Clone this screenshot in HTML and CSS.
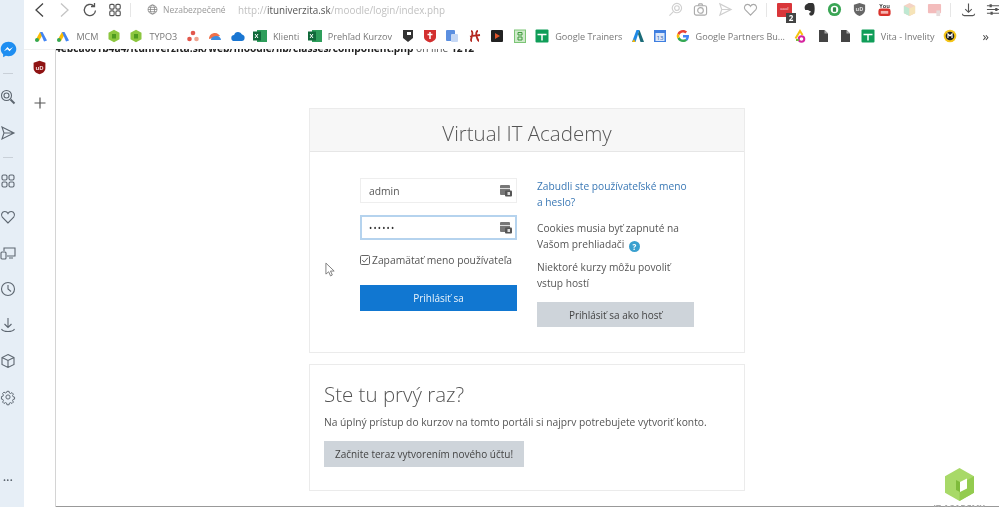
FILE: index.html
```html
<!DOCTYPE html>
<html lang="sk">
<head>
<meta charset="utf-8">
<title>Virtual IT Academy</title>
<link rel="stylesheet" href="styles.css">
</head>
<body>
<div class="app">
  <aside class="sidebar">
    <div class="side-item"><svg class="ic-messenger" viewBox="0 0 24 24"><path fill="#1f8ef1" d="M12 1C5.6 1 1 5.500 1 11.300c0 3 1.300 5.700 3.400 7.500V23l3.800-2.100c1.200.4 2.500.6 3.800.6 6.400 0 11-4.500 11-10.200S18.400 1 12 1z"/><path fill="#fff" d="M5.500 14.500l5-6 3 3 5-3-5 6-3-3z"/></svg></div>
    <div class="side-dash"></div>
    <div class="side-item"><svg class="ic" viewBox="0 0 16 16"><circle cx="6.500" cy="6.500" r="5"/><circle cx="6.500" cy="6.500" r="2.500"/><path d="M10.500 10.500l4 4" stroke-width="2"/></svg></div>
    <div class="side-item"><svg class="ic" viewBox="0 0 16 16"><path d="M2 2l12 6-12 6 2-6zM4 8h10"/></svg></div>
    <div class="side-dash"></div>
    <div class="side-item"><svg class="ic" viewBox="0 0 16 16"><rect x="2" y="2" width="5" height="5" rx="1.500"/><rect x="9" y="2" width="5" height="5" rx="1.500"/><rect x="2" y="9" width="5" height="5" rx="1.500"/><rect x="9" y="9" width="5" height="5" rx="1.500"/></svg></div>
    <div class="side-item"><svg class="ic" viewBox="0 0 16 16"><path d="M8 14L2.300 8.200C.5 6 2 2.500 4.800 2.500 6.300 2.500 7.400 3.300 8 4.500c.6-1.200 1.700-2 3.200-2 2.800 0 4.300 3.500 2.500 5.700z"/></svg></div>
    <div class="side-item"><svg class="ic" viewBox="0 0 16 16"><path d="M4 6V3h11v8H7M9 13h4"/><rect x="1" y="7" width="5" height="7" rx="1"/></svg></div>
    <div class="side-item"><svg class="ic" viewBox="0 0 16 16"><circle cx="8" cy="8" r="6.500"/><path d="M8 4v4l3 2.500"/></svg></div>
    <div class="side-item"><svg class="ic" viewBox="0 0 16 16"><path d="M8 1v9M4.500 7L8 10.500 11.500 7M1.500 12c1 2 3 2.500 6.500 2.500s5.500-.5 6.500-2.500"/></svg></div>
    <div class="side-item"><svg class="ic" viewBox="0 0 16 16"><path d="M8 1.500l6 3v7l-6 3-6-3v-7zM2 4.500l6 3 6-3M8 7.500v7"/></svg></div>
    <div class="side-item"><svg class="ic ic-gear" viewBox="0 0 16 16"><circle cx="8" cy="8" r="2.400"/><path d="M6.800 1.500h2.400l.4 1.900 1.300.6 1.700-1 1.600 1.700-1 1.600.6 1.400 1.700.4v2.300l-1.700.4-.6 1.400 1 1.600-1.600 1.600-1.700-1-1.300.6-.4 1.900H6.800l-.4-1.900-1.300-.6-1.700 1-1.600-1.600 1-1.600-.6-1.400-1.700-.4V7.500l1.700-.4.6-1.400-1-1.600L3.400 2.400l1.700 1 1.300-.6z"/></svg></div>
    <div class="side-item side-more">•••</div>
  </aside>

  <div class="main">
    <header class="toolbar">
      <svg class="nav" viewBox="0 0 16 16"><path d="M11 1.500L4 8l7 6.500"/></svg>
      <svg class="nav nav-off" viewBox="0 0 16 16"><path d="M5 1.500L12 8l-7 6.500"/></svg>
      <svg class="nav nav-reload" viewBox="0 0 16 16"><path d="M13.500 8.500A5.600 5.600 0 1 1 11.500 3.700M12.500 1v3.500H9"/></svg>
      <svg class="nav nav-grid" viewBox="0 0 16 16"><rect x="2" y="1.500" width="5" height="5.500" rx="1.500"/><rect x="9" y="1.500" width="5" height="5.500" rx="1.500"/><rect x="2" y="9" width="5" height="5.500" rx="1.500"/><rect x="9" y="9" width="5" height="5.500" rx="1.500"/></svg>
      <span class="tool-sep"></span>
      <svg class="globe" viewBox="0 0 16 16"><circle cx="8" cy="8" r="6.500"/><ellipse cx="8" cy="8" rx="3" ry="6.500"/><path d="M1.500 8h13M2.500 4.800h11M2.500 11.200h11"/></svg>
      <span class="insecure">Nezabezpečené</span>
      <span class="url">http://<b>ituniverzita.sk</b>/moodle/login/index.php</span>
      <div class="tool-right">
        <svg class="t-ic t-pale" viewBox="0 0 16 16"><circle cx="9.500" cy="6.500" r="5"/><circle cx="9.500" cy="6.500" r="2.500"/><path d="M5.500 10.500L1.500 14.500"/></svg>
        <svg class="t-ic t-mid" viewBox="0 0 16 16"><rect x="1.500" y="4" width="13" height="10" rx="2"/><circle cx="8" cy="9" r="3"/><path d="M5.500 4l1-2h3l1 2"/></svg>
        <svg class="t-ic t-pale" viewBox="0 0 16 16"><path d="M2 2l12 6-12 6 2-6zM4 8h10"/></svg>
        <svg class="t-ic t-mid" viewBox="0 0 16 16"><path d="M8 14L2.300 8.200C.5 6 2 2.500 4.800 2.500 6.300 2.500 7.400 3.300 8 4.500c.6-1.200 1.700-2 3.200-2 2.800 0 4.300 3.500 2.500 5.700z"/></svg>
        <span class="tool-sep tool-sep-r"></span>
        <span class="ext-red"><span class="ext-dots">ooo!</span><span class="ext-badge">2</span></span>
        <svg class="t-fill" viewBox="0 0 16 16"><path fill="#333" d="M4 3l3-2h3c3 0 3.500 2 3.500 6 0 4-.5 7-3 7.500-1.500.3-2.800-.6-2.800-2 0-1.200 1-1.800 2.300-1.600-.5-1.500-2.800-1.500-3.500-2.400H3.500C2.500 6.500 2.500 4.500 4 3z"/></svg>
        <svg class="t-fill" viewBox="0 0 16 16"><circle cx="8" cy="8" r="7" fill="#3aa655"/><circle cx="8" cy="8" r="4" fill="#fff"/><rect x="6.300" y="5.500" width="3.400" height="5" rx="1" fill="#2f8a47"/></svg>
        <svg class="t-fill" viewBox="0 0 16 16"><path fill="#666" d="M8 1l6 2v5c0 3.500-2.500 5.800-6 7-3.500-1.200-6-3.500-6-7V3z"/><text x="8" y="10" class="shield-txt">uD</text></svg>
        <svg class="t-fill" viewBox="0 0 16 16"><text x="8" y="6" class="yt-top">You</text><rect x="1.500" y="7" width="13" height="8" rx="2.500" fill="#d9322b"/><rect x="4" y="9.500" width="8" height="3" fill="#f5b5b0"/></svg>
        <svg class="t-fill" viewBox="0 0 16 16"><path fill="#f4d3c4" d="M8 1l6 3v8l-6 3-6-3V4z"/><path fill="#bfe8d2" d="M2 4l6 3v8l-6-3z"/><path fill="#f6e4b8" d="M14 4L8 7v8l6-3z"/></svg>
        <svg class="t-fill" viewBox="0 0 16 16"><rect x="1" y="2" width="14" height="10" rx="1" fill="#f3bcbc"/><rect x="10" y="9" width="4" height="6" fill="#e5dcdc"/></svg>
        <span class="tool-sep tool-sep-r2"></span>
        <svg class="t-ic t-dark" viewBox="0 0 16 16"><path d="M8 1.500v9M4.500 7.500L8 11l3.500-3.500M1.500 12.500c0 1.300.7 2 2 2h9c1.300 0 2-.7 2-2"/></svg>
        <svg class="t-ic t-dark" viewBox="0 0 16 16"><path d="M1 4h14M1 8h14M1 12h14"/><path d="M5 2.500v3M11 6.500v3M6 10.500v3" stroke-width="2.400"/></svg>
      </div>
    </header>

    <nav class="bookmarks">
      <span class="bm"><svg viewBox="0 0 14 14"><path fill="#fbbc04" d="M1 12L6 3l3 2-4 7z"/><path fill="#4285f4" d="M6 3h2.500L13 11.500l-3 1z"/><circle cx="3" cy="11" r="2" fill="#34a853"/></svg></span>
      <span class="bm"><svg viewBox="0 0 14 14"><path fill="#fbbc04" d="M1 12L6 3l3 2-4 7z"/><path fill="#4285f4" d="M6 3h2.500L13 11.500l-3 1z"/><circle cx="3" cy="11" r="2" fill="#34a853"/></svg>MCM</span>
      <span class="bm"><svg viewBox="0 0 14 14"><path fill="#8cc63f" d="M7 .8l5.500 3v6.400L7 13.200l-5.500-3V3.800z"/><rect x="5" y="5" width="4" height="4.500" fill="#4f9a1f"/></svg></span>
      <span class="bm"><svg viewBox="0 0 14 14"><path fill="#8cc63f" d="M7 .8l5.500 3v6.400L7 13.200l-5.500-3V3.800z"/><rect x="5" y="5" width="4" height="4.500" fill="#4f9a1f"/></svg>TYPO3</span>
      <span class="bm"><svg viewBox="0 0 14 14"><circle cx="7" cy="4" r="2.300" fill="#e2574c"/><circle cx="3.500" cy="10" r="2.300" fill="#e2574c"/><circle cx="10.500" cy="10" r="2.300" fill="#f0a38e"/></svg></span>
      <span class="bm"><svg viewBox="0 0 14 14"><path fill="#f0714a" d="M1 10c0-4 3-6 6-6s4 2 5 3l-3 1z"/><path fill="#3d8de0" d="M3 11c0-3 3-4 5.500-4S13 9 13 11z"/></svg></span>
      <span class="bm"><svg viewBox="0 0 14 14"><path fill="#1976d2" d="M3.500 12a3 3 0 0 1-.4-6A4.200 4.200 0 0 1 11 5.500 3.300 3.300 0 0 1 10.700 12z"/></svg></span>
      <span class="bm"><svg viewBox="0 0 14 14"><rect x="4" y="1" width="10" height="12" fill="#2e9e5b"/><rect x="0" y="2.500" width="8" height="9" fill="#10693a"/><path d="M2 5l3 4M5 5L2 9" stroke="#fff" fill="none"/></svg>Klienti</span>
      <span class="bm"><svg viewBox="0 0 14 14"><rect x="4" y="1" width="10" height="12" fill="#2e9e5b"/><rect x="0" y="2.500" width="8" height="9" fill="#10693a"/><path d="M2 5l3 4M5 5L2 9" stroke="#fff" fill="none"/></svg>Prehľad Kurzov</span>
      <span class="bm"><svg viewBox="0 0 14 14"><path fill="#333" d="M2 1h10v8l-5 4-5-4z"/><rect x="6" y="3" width="4" height="3" fill="#fff"/></svg></span>
      <span class="bm"><svg viewBox="0 0 14 14"><path fill="#d32f2f" d="M1 1h12v7c0 3-3 4.500-6 5.500C4 12.500 1 11 1 8z"/><path stroke="#fff" stroke-width="1.500" d="M7 3v7M4.500 5.500h5"/></svg></span>
      <span class="bm"><svg viewBox="0 0 14 14"><rect x="1" y="1" width="9" height="11" rx="1" fill="#5b8fe0"/><rect x="6" y="5" width="7" height="8" rx="1" fill="#c4d7f5"/></svg></span>
      <span class="bm"><svg viewBox="0 0 14 14"><path fill="none" stroke="#b3261e" stroke-width="1.800" d="M3 2c2 0 1.500 3 1 5s-2 5 0 5M10 2c-2 0-2 3-1.500 5s2 5 2.500 5M2 7.500c3-1 6-1 10-1.500"/></svg></span>
      <span class="bm"><svg viewBox="0 0 14 14"><rect x="1" y="1" width="12" height="12" rx="1" fill="#222"/><path fill="#e0542a" d="M5 4l5 3-5 3z"/></svg></span>
      <span class="bm"><svg viewBox="0 0 14 14"><rect x="1.500" y="1" width="11" height="12.500" fill="#cfeacb" stroke="#7cc576"/><path d="M5 3.500h4v2.500H5zM5 8h4v3H5z" fill="none" stroke="#3d9a3a"/></svg></span>
      <span class="bm"><svg viewBox="0 0 14 14"><rect width="13" height="13" x=".5" y=".5" rx="1" fill="#0f9d58"/><path stroke="#fff" stroke-width="1.500" d="M2.500 5.500h9M7 5.500v6"/></svg>Google Trainers</span>
      <span class="bm"><svg viewBox="0 0 14 14"><path fill="#1e88e5" d="M5.500 1h3l-4 12H1z"/><path fill="#1b6b78" d="M7 5l1.500-4L13 13H9.500z"/><path fill="#f4b400" d="M1 13l2-3 1.500 3z"/></svg></span>
      <span class="bm"><svg viewBox="0 0 14 14"><rect x="1" y="1" width="12" height="12" fill="#3f7fe0"/><rect x="2.500" y="4" width="9" height="8" fill="#dbe7fa"/><text x="7" y="10.500" class="cal-txt">13</text></svg></span>
      <span class="bm"><svg viewBox="0 0 14 14"><path fill="#4285f4" d="M13 7.200c0-.5 0-.9-.1-1.300H7v2.500h3.400c-.2.800-.6 1.400-1.300 1.900l2 1.500C12.200 10.600 13 9 13 7.200z"/><path fill="#34a853" d="M7 13c1.700 0 3-.6 4.100-1.600l-2-1.500c-.6.400-1.300.6-2.100.6-1.600 0-3-1.100-3.500-2.600l-2.100 1.600C2.400 11.500 4.500 13 7 13z"/><path fill="#fbbc04" d="M3.500 7.900C3.300 7.300 3.300 6.700 3.500 6.100L1.400 4.500C.5 6.100.5 7.900 1.400 9.500z"/><path fill="#ea4335" d="M7 3.500c.9 0 1.700.3 2.300.9l1.800-1.800C10 1.600 8.600 1 7 1 4.500 1 2.400 2.500 1.400 4.500l2.100 1.600C4 4.600 5.400 3.500 7 3.500z"/></svg>Google Partners Bu...</span>
      <span class="bm"><svg viewBox="0 0 14 14"><path fill="none" stroke="#f4c20d" stroke-width="2" d="M2.500 9.500L7 2l2.500 4"/><circle cx="8.500" cy="10" r="2.800" fill="none" stroke="#d6249f" stroke-width="2"/><path stroke="#7cb342" stroke-width="2" d="M3 11h3"/></svg></span>
      <span class="bm"><svg viewBox="0 0 14 14"><path fill="#444" d="M3 1h5.500L12 4.500V13H3z"/><path fill="#aaa" d="M8.500 1v3.500H12z"/></svg></span>
      <span class="bm"><svg viewBox="0 0 14 14"><path fill="#444" d="M3 1h5.500L12 4.500V13H3z"/><path fill="#aaa" d="M8.500 1v3.500H12z"/></svg></span>
      <span class="bm"><svg viewBox="0 0 14 14"><rect width="13" height="13" x=".5" y=".5" rx="1" fill="#0f9d58"/><path stroke="#fff" stroke-width="1.500" d="M2.500 5.500h9M7 5.500v6"/></svg>Vita - Invelity</span>
      <span class="bm"><svg viewBox="0 0 14 14"><circle cx="7" cy="7" r="6.300" fill="#f5c518"/><circle cx="7" cy="7" r="4.300" fill="#222"/><path stroke="#fff" stroke-width="1.200" d="M5 9V5l2 2 2-2v4"/></svg></span>
      <span class="bm-more">»</span>
    </nav>

    <div class="body-row">
      <div class="ext-panel">
        <svg class="ud" viewBox="0 0 14 14"><path fill="#8f1313" d="M7 .8l5.500 1.800v4.800c0 3-2.300 4.800-5.500 5.900-3.200-1.100-5.500-2.900-5.500-5.900V2.600z"/><text x="7" y="9" class="shield-txt2">uD</text></svg>
        <svg class="plus" viewBox="0 0 12 12"><path d="M6 .5v11M.5 6h11"/></svg>
      </div>
      <main class="content">
        <p class="php-error"><b>4ebca001b4a4/ituniverzita.sk/web/moodle/lib/classes/component.php</b> on line <b>1212</b></p>

        <section class="card">
          <h1 class="card-title">Virtual IT Academy</h1>
          <div class="login">
            <form class="login-form">
              <div class="field"><span>admin</span><svg class="key" viewBox="0 0 12 12"><rect x="0" y="0" width="10" height="10" rx="1" fill="#777"/><rect x="0" y="3" width="10" height="1" fill="#ddd"/><rect x="5" y="5.500" width="7" height="6" rx="1" fill="#555"/><rect x="7.500" y="7" width="2.500" height="3" fill="#ddd"/></svg></div>
              <div class="field field-focus"><span class="dots">••••••</span><svg class="key" viewBox="0 0 12 12"><rect x="0" y="0" width="10" height="10" rx="1" fill="#777"/><rect x="0" y="3" width="10" height="1" fill="#ddd"/><rect x="5" y="5.500" width="7" height="6" rx="1" fill="#555"/><rect x="7.500" y="7" width="2.500" height="3" fill="#ddd"/></svg></div>
              <label class="remember"><svg class="check" viewBox="0 0 10 10"><rect x=".5" y=".5" width="9" height="9" rx="1.200"/><path d="M2.200 5l2 2.200 3.600-4.400"/></svg>Zapamätať meno používateľa</label>
              <div class="btn btn-primary">Prihlásiť sa</div>
            </form>
            <div class="login-info">
              <a class="forgot">Zabudli ste používateľské meno a heslo?</a>
              <p class="info-a">Cookies musia byť zapnuté na Vašom prehliadači <span class="help">?</span></p>
              <p class="info-b">Niektoré kurzy môžu povoliť vstup hostí</p>
              <div class="btn btn-guest">Prihlásiť sa ako hosť</div>
            </div>
          </div>
        </section>

        <section class="card card-signup">
          <h2 class="signup-title">Ste tu prvý raz?</h2>
          <p class="signup-text">Na úplný prístup do kurzov na tomto portáli si najprv potrebujete vytvoriť konto.</p>
          <div class="btn btn-new">Začnite teraz vytvorením nového účtu!</div>
        </section>
      </main>
    </div>
  </div>
</div>

<svg class="cursor" viewBox="0 0 12 16"><path d="M1 1v12l3-2.500 2 4.500 2-1-2-4.300h4z"/></svg>
<div class="brand">
  <svg viewBox="0 0 29 33"><path fill="#a8d968" d="M14.500 0L29 8.200v16.600L14.500 33 0 24.800V8.200z"/><path fill="#93cb4f" d="M14.500 33V16.500L29 8.200v16.600z"/><path fill="#fff" d="M15 14l7-3.500v10L15 24z"/><path fill="#7fbb3c" d="M11 12l4 2v10l-4-2z"/></svg>
  <span>IT ACADEMY</span>
</div>
</body>
</html>
```
FILE: styles.css
```css
* { box-sizing: border-box; }
html, body { margin: 0; padding: 0; height: 507px; overflow: hidden; background: #fff; }
body { font-family: "Open Sans", "Liberation Sans", sans-serif; color: #444; position: relative; }
.app { display: flex; width: 999px; height: 507px; overflow: hidden; filter: blur(.6px); }

.sidebar { width: 24px; flex: none; background: #e6eef6; display: flex; flex-direction: column; align-items: center; padding: 31px 8px 10px 0; }
.side-item { width: 16px; height: 36px; flex: none; display: flex; align-items: center; justify-content: center; }
.side-dash { width: 10px; height: 12px; flex: none; display: flex; align-items: center; }
.side-dash::before { content: ""; width: 10px; height: 1px; background: #c9d0d8; }
.ic { width: 16px; height: 16px; flex: none; fill: none; stroke: #5d6670; stroke-width: 1.100; overflow: visible; }
.ic-gear { width: 14px; height: 14px; }
.ic-messenger { width: 17px; height: 17px; flex: none; }
.side-more { margin-top: auto; font-size: 8px; color: #5d6670; white-space: nowrap; letter-spacing: .4px; }

.main { flex: 1; min-width: 0; display: flex; flex-direction: column; }
.toolbar { height: 24px; flex: none; display: flex; align-items: center; padding: 0 0 5px 8px; }
.nav { width: 16px; height: 16px; flex: none; fill: none; stroke: #444; stroke-width: 1.300; margin-right: 8px; }
.nav-off { stroke: #c4c4c4; margin-right: 10px; }
.nav-reload { margin-right: 10px; stroke: #555; }
.nav-grid { stroke: #555; margin-right: 8px; width: 14px; height: 14px; }
.tool-sep { width: 1px; height: 14px; background: #e6e6e6; flex: none; margin-right: 16px; }
.globe { width: 11px; height: 11px; flex: none; fill: none; stroke: #777; stroke-width: 1; margin-right: 5px; }
.insecure { font-size: 8.500px; color: #999; width: 75px; flex: none; white-space: nowrap; }
.url { font-size: 9.900px; color: #c0c0c0; white-space: nowrap; }
.url b { font-weight: 400; color: #555; }
.tool-right { margin-left: auto; display: flex; align-items: center; gap: 10px; margin-right: -2px; }
.t-ic { width: 15px; height: 15px; flex: none; fill: none; stroke-width: 1.200; }
.t-pale { stroke: #cfcfcf; }
.t-mid { stroke: #aaa; }
.t-dark { stroke: #555; }
.t-fill { width: 15px; height: 15px; flex: none; }
.tool-sep-r { margin: 0 0 0 -2px; }
.tool-sep-r2 { margin: 0 0 0 -2px; }
.ext-red { width: 15px; height: 14px; background: #d9363a; flex: none; position: relative; border-radius: 1px; display: block; }
.ext-dots { color: #fff; font-size: 4px; display: block; text-align: center; line-height: 12px; }
.ext-badge { position: absolute; right: -4px; bottom: -6px; width: 10px; height: 10px; background: #444; color: #fff; font-size: 8px; line-height: 10px; text-align: center; font-weight: 700; }
.shield-txt { font: 700 6px "Open Sans", sans-serif; fill: #ddd; text-anchor: middle; }
.shield-txt2 { font: 700 5.500px "Open Sans", sans-serif; fill: #f2d8d8; text-anchor: middle; }
.yt-top { font: 700 6px "Open Sans", sans-serif; fill: #444; text-anchor: middle; }
.cal-txt { font: 400 6px "Open Sans", sans-serif; fill: #2a5cab; text-anchor: middle; }

.bookmarks { height: 24px; flex: none; display: flex; align-items: center; gap: 8.450px; padding: 0 10px 0 10px; font-size: 9.100px; color: #777; white-space: nowrap; }
.bm { display: flex; align-items: center; gap: 6px; flex: none; }
.bm svg { width: 14px; height: 14px; flex: none; }
.bm-more { margin-left: auto; font-size: 13px; color: #444; line-height: 14px; }

.body-row { flex: 1; min-height: 0; display: flex; margin-top: 1px; }
.ext-panel { width: 32px; flex: none; border-right: 1px solid #d4d4d4; border-top: 1px solid #f0f0f0; display: flex; flex-direction: column; align-items: center; padding-top: 10px; gap: 22px; }
.ud { width: 15px; height: 15px; flex: none; }
.plus { width: 12px; height: 12px; flex: none; fill: none; stroke: #555; stroke-width: 1.200; }
.content { flex: 1; min-width: 0; border-bottom: 1px solid #999; overflow: hidden; display: flex; flex-direction: column; align-items: center; padding-right: 1px; }
.php-error { margin: -7px 0 53px -1px; font-size: 10.200px; line-height: 13px; align-self: flex-start; color: #555; white-space: nowrap; height: 13px; }
.php-error b { color: #222; }

.card { width: 436px; flex: none; border: 1px solid #ebebeb; }
.card-title { margin: 0; height: 43px; background: #f7f7f7; border-bottom: 1px solid #e6e6e6; font-size: 20.500px; font-weight: 300; line-height: 48px; text-align: center; color: #555; }
.login { display: grid; grid-template-columns: 157px 157px; column-gap: 20px; padding: 26px 0 25px 50px; }
.login-form { display: flex; flex-direction: column; }
.field { height: 25px; border: 1px solid #eee; display: flex; align-items: center; justify-content: space-between; padding: 0 4px 0 8px; font-size: 10.300px; color: #555; margin-bottom: 12px; }
.field-focus { border: 2px solid #b5d3ee; padding-left: 7px; padding-right: 3px; margin-bottom: 12px; }
.dots { font-size: 8.500px; letter-spacing: 1.200px; color: #333; }
.key { width: 12px; height: 12px; flex: none; }
.remember { display: flex; align-items: center; gap: 2px; font-size: 10.300px; height: 16px; white-space: nowrap; margin-bottom: 17px; color: #555; }
.check { width: 10px; height: 10px; flex: none; fill: #fff; stroke: #666; stroke-width: 1; }
.btn { display: flex; align-items: center; justify-content: center; height: 26px; font-size: 10px; white-space: nowrap; }
.btn-primary { background: #1177d1; color: #e9f3fb; }
.btn-guest { background: #ced4da; color: #444; margin-top: 11px; height: 25px; }
.login-info { font-size: 10.200px; line-height: 16px; color: #555; }
.forgot { display: block; color: #3a78b5; }
.info-a { margin: 10px 0 0; }
.info-b { margin: 7px 0 0; }
.help { display: inline-block; width: 11px; height: 11px; margin-left: 2px; border-radius: 50%; background: #3aa0cf; color: #fff; font-size: 8px; font-weight: 700; line-height: 11px; text-align: center; vertical-align: -2px; }

.card-signup { margin-top: 11px; height: 127px; padding: 14px 14px 0; }
.signup-title { margin: 0; font-size: 20.500px; font-weight: 300; line-height: 30px; color: #555; }
.signup-text { margin: 5px 0 0; font-size: 10.250px; line-height: 16px; color: #555; white-space: nowrap; }
.btn-new { margin-top: 11px; width: 200px; background: #ced4da; color: #444; }

.cursor { position: absolute; left: 325px; top: 262px; width: 11px; height: 15px; fill: #fff; stroke: #777; stroke-width: 1; filter: blur(.3px); }
.brand { position: absolute; left: 931px; top: 468px; width: 56px; display: flex; flex-direction: column; align-items: center; filter: blur(.7px); height: 39px; overflow: hidden; gap: 2px; }
.brand svg { width: 29px; height: 33px; flex: none; }
.brand span { font-size: 8.500px; line-height: 9px; font-weight: 700; color: #aaa; white-space: nowrap; }
```
